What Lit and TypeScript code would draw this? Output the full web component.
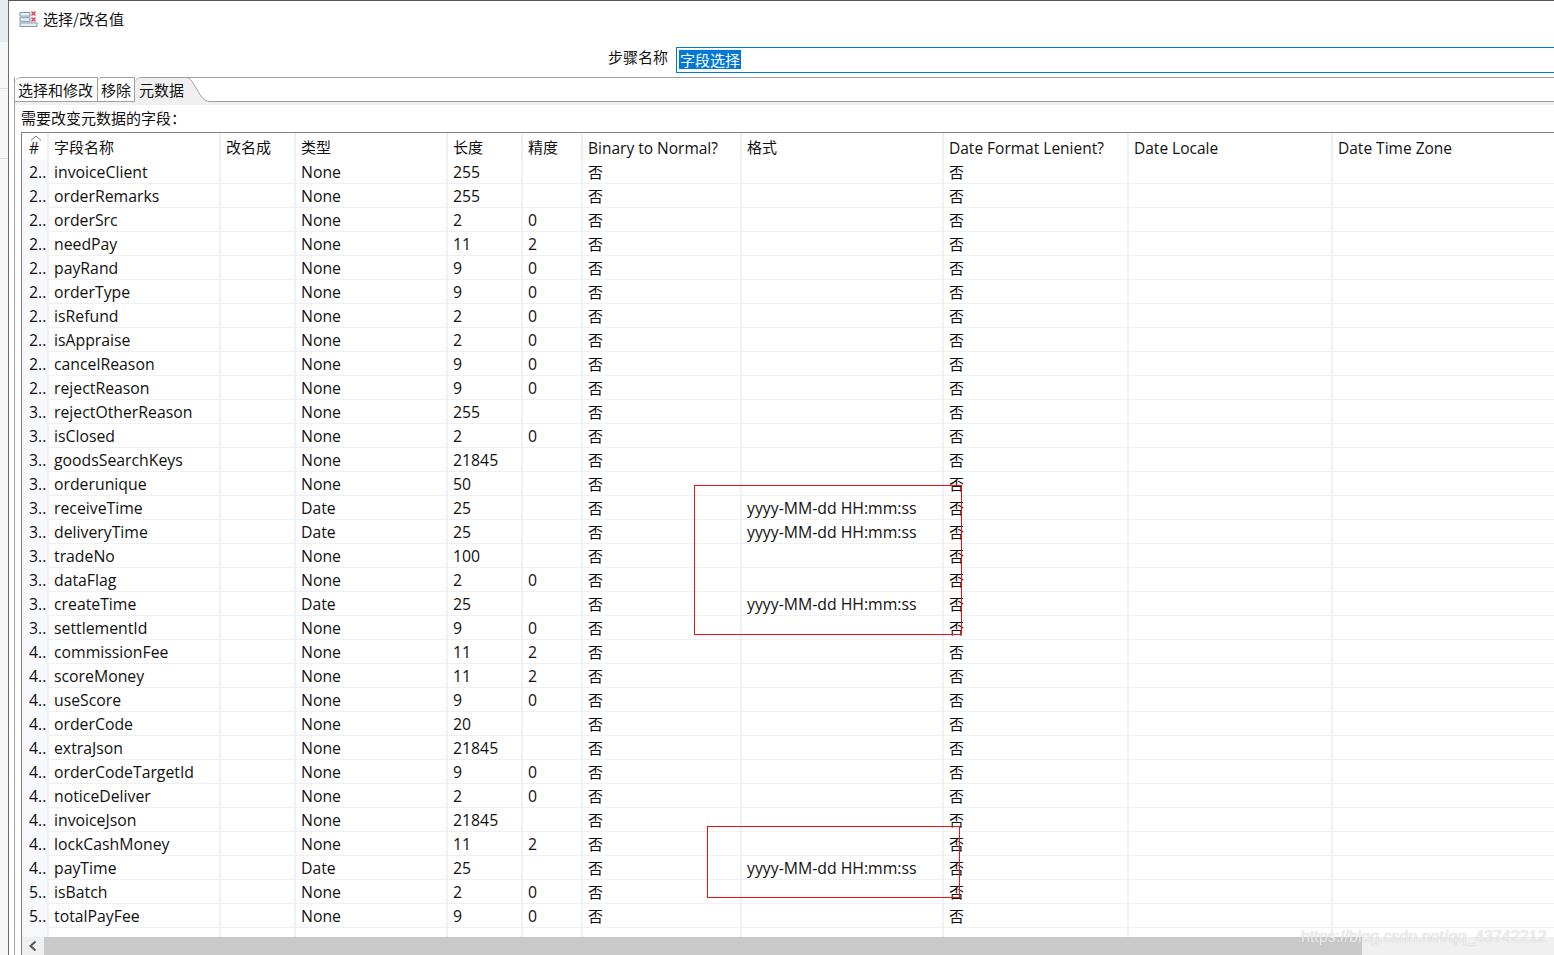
import { LitElement, html, css } from "lit";
import { customElement } from "lit/decorators.js";

const D = "yyyy-MM-dd HH:mm:ss";
const rows: [string, string, string, string, string, string?][] = [
  ["2..", "invoiceClient", "None", "255", ""],
  ["2..", "orderRemarks", "None", "255", ""],
  ["2..", "orderSrc", "None", "2", "0"],
  ["2..", "needPay", "None", "11", "2"],
  ["2..", "payRand", "None", "9", "0"],
  ["2..", "orderType", "None", "9", "0"],
  ["2..", "isRefund", "None", "2", "0"],
  ["2..", "isAppraise", "None", "2", "0"],
  ["2..", "cancelReason", "None", "9", "0"],
  ["2..", "rejectReason", "None", "9", "0"],
  ["3..", "rejectOtherReason", "None", "255", ""],
  ["3..", "isClosed", "None", "2", "0"],
  ["3..", "goodsSearchKeys", "None", "21845", ""],
  ["3..", "orderunique", "None", "50", ""],
  ["3..", "receiveTime", "Date", "25", "", D],
  ["3..", "deliveryTime", "Date", "25", "", D],
  ["3..", "tradeNo", "None", "100", ""],
  ["3..", "dataFlag", "None", "2", "0"],
  ["3..", "createTime", "Date", "25", "", D],
  ["3..", "settlementId", "None", "9", "0"],
  ["4..", "commissionFee", "None", "11", "2"],
  ["4..", "scoreMoney", "None", "11", "2"],
  ["4..", "useScore", "None", "9", "0"],
  ["4..", "orderCode", "None", "20", ""],
  ["4..", "extraJson", "None", "21845", ""],
  ["4..", "orderCodeTargetId", "None", "9", "0"],
  ["4..", "noticeDeliver", "None", "2", "0"],
  ["4..", "invoiceJson", "None", "21845", ""],
  ["4..", "lockCashMoney", "None", "11", "2"],
  ["4..", "payTime", "Date", "25", "", D],
  ["5..", "isBatch", "None", "2", "0"],
  ["5..", "totalPayFee", "None", "9", "0"],
];
const headers = ["字段名称", "改名成", "类型", "长度", "精度", "Binary to Normal?", "格式", "Date Format Lenient?", "Date Locale", "Date Time Zone"];

@customElement("app-root")
export class AppRoot extends LitElement {
  static styles = css`
    :host { display: block; width: 1554px; height: 955px; overflow: hidden; background: #fff; font-family: "Open Sans", "Noto Sans CJK SC", sans-serif; font-size: 15.8px; color: #111; }
    * { box-sizing: border-box; }
    .page { display: flex; height: 955px; position: relative; }
    .gutter { width: 8px; flex: none; display: flex; flex-direction: column; background: #f6f6f6; }
    .g1 { height: 42px; background: #e7eaee; }
    .g2 { height: 47px; border-bottom: 1px solid #dcdcdc; }
    .g3 { height: 70px; border-bottom: 1px solid #dcdcdc; }
    .window { flex: 1; min-width: 0; border-left: 1px solid #6a6a6a; border-top: 1px solid #555; display: flex; flex-direction: column; padding-left: 5px; }
    .title { height: 46px; flex: none; display: flex; align-items: flex-start; padding: 9px 0 0 5px; gap: 5px; font-size: 15px; line-height: 18px; font-family: "Noto Sans CJK SC", sans-serif; }
    .title svg { flex: none; margin-top: 1px; }
    .step { height: 26px; flex: none; display: flex; margin-bottom: 4px; }
    .step label { width: 662px; flex: none; text-align: right; padding-right: 8px; font-size: 15px; line-height: 20px; font-family: "Noto Sans CJK SC", sans-serif; }
    .input { flex: 1; border: 1px solid #0078d7; border-right: 0; padding: 2px 0 0 2px; font-size: 15px; line-height: 19px; font-family: "Noto Sans CJK SC", sans-serif; }
    .input span { display: inline-block; background: #0078d7; color: #fff; padding: 0 1px; }
    .folder { flex: 1; min-height: 0; display: flex; flex-direction: column; border-left: 1px solid #a0a0a0; }
    .tabs { height: 25px; flex: none; display: flex; font-size: 15px; font-family: "Noto Sans CJK SC", sans-serif; }
    .tab { height: 25px; border-top: 1px solid #a0a0a0; border-bottom: 1px solid #a0a0a0; border-right: 1px solid #a0a0a0; padding: 2px 0 0 3px; line-height: 20px; background: #fff; flex: none; white-space: nowrap; }
    .tab.t1 { width: 83px; border-top-left-radius: 6px; }
    .tab.t2 { width: 37px; border-top-left-radius: 4px; }
    .tab.t3 { width: 50px; padding-left: 4px; background: #f0f0f0; border-right: 0; border-bottom: 0; border-top-left-radius: 6px; }
    .curve { width: 27px; height: 25px; flex: none; display: block; }
    .rest { flex: 1; border-top: 1px solid #a0a0a0; border-bottom: 1px solid #a0a0a0; }
    .panel { flex: 1; min-height: 0; display: flex; flex-direction: column; border-top: 3px solid #f0f0f0; padding: 3px 0 0 6px; }
    .panel h4 { margin: 0; font-weight: 400; font-size: 15px; line-height: 20px; height: 22px; flex: none; font-family: "Noto Sans CJK SC", sans-serif; }
    .table { flex: 1; min-height: 0; border-top: 1px solid #808080; border-left: 1px solid #808080; display: flex; flex-direction: column; overflow: hidden; margin-top: 2px; }
    .row, .spacer { display: grid; grid-template-columns: 27px 172px 75px 152px 75px 60px 159px 202px 185px 204px 1fr; }
    .row { flex: none; }
    .head { height: 27px; font-size: 15.5px; }
    .head .c { height: 27px; line-height: 27px; padding: 2px 0 0 5px; border-right: 2px solid #eef0f4; white-space: nowrap; }
    .head .c.cjk { padding-top: 0; }
    .body-row { height: 24px; line-height: 25px; border-bottom: 1px solid #eef0f4; }
    .body-row .c { height: 24px; border-right: 2px solid #eef2f8; padding-left: 5px; white-space: nowrap; overflow: hidden; }
    .body-row .c.cjk { line-height: 23px; }
    .row .c.num { padding-left: 7px; background: #f7f8fa; }
    .head .c.num { background: #fff; position: relative; }
    .head .num svg { position: absolute; left: 8px; top: 2px; }
    .row .c.last { border-right: 0; }
    .cjk { font-family: "Noto Sans CJK SC", sans-serif; font-size: 15px; }
    .spacer { flex: 1; min-height: 0; }
    .spacer div { border-right: 2px solid #eef2f8; }
    .spacer div:first-child { background: #f7f8fa; }
    .spacer div:last-child { border-right: 0; }
    .scroll { height: 18px; flex: none; display: flex; background: #f0f0f0; }
    .arrow { width: 22px; flex: none; display: flex; align-items: center; justify-content: center; }
    .thumb { width: 1318px; background: #c9c9c9; flex: none; }
    .mark { position: absolute; border: 1px solid #f01010; pointer-events: none; }
    .m1 { left: 694px; top: 485px; width: 268px; height: 150px; }
    .m2 { left: 707px; top: 826px; width: 253px; height: 72px; }
    .wm { position: absolute; left: 1301px; top: 926px; font-family: "Liberation Sans", sans-serif; font-size: 16px; line-height: 22px; color: rgba(255, 255, 255, 0.8); text-shadow: 0 0 1px rgba(150, 150, 150, 0.7); white-space: nowrap; }
  `;

  private icon() {
    return html`<svg width="19" height="17" viewBox="0 0 19 17" fill="none">
      <rect x="1" y="1.5" width="10" height="3.6" fill="#e9eef3" stroke="#7f99ad"></rect>
      <rect x="1" y="6.7" width="10" height="3.6" fill="#e9eef3" stroke="#7f99ad"></rect>
      <rect x="1" y="11.9" width="17" height="3.6" fill="#e9eef3" stroke="#7f99ad"></rect>
      <path d="M12.5 .5l4 4M16.5 .5l-4 4M12.5 6.5l4 4M16.5 6.5l-4 4" stroke="#ee3b5b" stroke-width="1.5"></path>
    </svg>`;
  }

  render() {
    return html`<div class="page">
      <div class="gutter"><div class="g1"></div><div class="g2"></div><div class="g3"></div></div>
      <div class="window">
        <div class="title">${this.icon()}<span>选择/改名值</span></div>
        <div class="step"><label>步骤名称</label><div class="input"><span>字段选择</span></div></div>
        <div class="folder">
          <div class="tabs">
            <div class="tab t1">选择和修改</div>
            <div class="tab t2">移除</div>
            <div class="tab t3">元数据</div>
            <svg class="curve" viewBox="0 0 27 25">
              <path d="M0 1H1C10 1 13 24 25 24H27V25H0Z" fill="#f0f0f0"></path>
              <path d="M0 .5H27" fill="none" stroke="#a0a0a0"></path>
              <path d="M0 .5H1C10 .5 13 24.5 25 24.5H27" fill="none" stroke="#a0a0a0"></path>
            </svg>
            <div class="rest"></div>
          </div>
          <div class="panel">
            <h4>需要改变元数据的字段：</h4>
            <div class="table">
              <div class="row head">
                <div class="c num">#<svg width="12" height="6" viewBox="0 0 12 6" fill="none"><path d="M1 5.5L6 1l5 4.5" stroke="#777"></path></svg></div>
                ${headers.map((h, i) => html`<div class="c ${i === headers.length - 1 ? "last" : ""} ${/[^\x00-\x7f]/.test(h) ? "cjk" : ""}">${h}</div>`)}
              </div>
              ${rows.map(
                (r) => html`<div class="row body-row">
                  <div class="c num">${r[0]}</div>
                  <div class="c">${r[1]}</div>
                  <div class="c"></div>
                  <div class="c">${r[2]}</div>
                  <div class="c">${r[3]}</div>
                  <div class="c">${r[4]}</div>
                  <div class="c cjk">否</div>
                  <div class="c">${r[5] ?? ""}</div>
                  <div class="c cjk">否</div>
                  <div class="c"></div>
                  <div class="c last"></div>
                </div>`,
              )}
              <div class="spacer"><div></div><div></div><div></div><div></div><div></div><div></div><div></div><div></div><div></div><div></div><div></div></div>
              <div class="scroll">
                <div class="arrow"><svg width="10" height="12" viewBox="0 0 10 12" fill="none"><path d="M7.5 1.5L2.5 6l5 4.5" stroke="#555" stroke-width="2"></path></svg></div>
                <div class="thumb"></div>
              </div>
            </div>
          </div>
        </div>
      </div>
      <div class="mark m1"></div>
      <div class="mark m2"></div>
      <div class="wm">https://blog.csdn.net/qq_43742212</div>
    </div>`;
  }
}
